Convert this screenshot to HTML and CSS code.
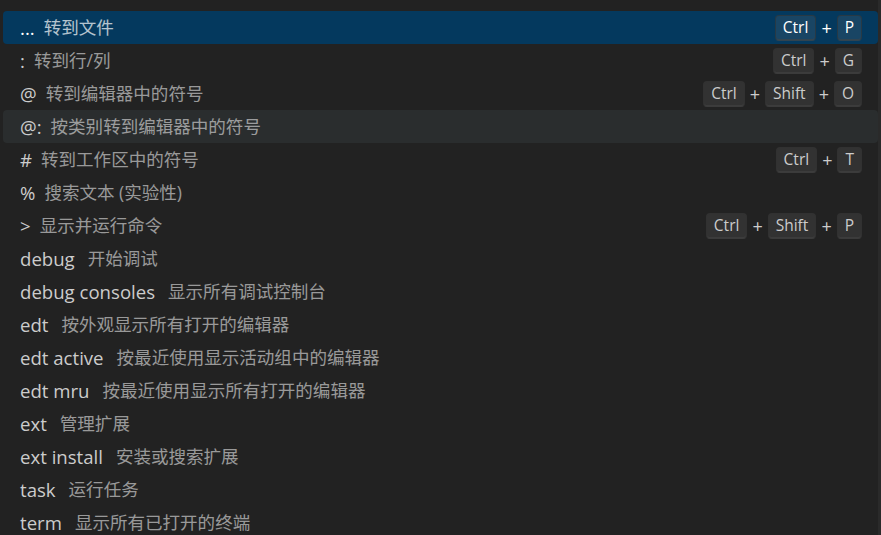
FILE: index.html
```html
<!DOCTYPE html>
<html lang="zh-CN">
<head>
<meta charset="utf-8">
<title>Quick Access</title>
<link rel="stylesheet" href="styles.css">
</head>
<body>
<div class="widget">
  <div class="list">
    <div class="row selected"><span class="label">...</span><span class="desc">转到文件</span><span class="keys"><kbd>Ctrl</kbd><span class="plus">+</span><kbd>P</kbd></span></div>
    <div class="row"><span class="label">:</span><span class="desc">转到行/列</span><span class="keys"><kbd>Ctrl</kbd><span class="plus">+</span><kbd>G</kbd></span></div>
    <div class="row"><span class="label">@</span><span class="desc">转到编辑器中的符号</span><span class="keys"><kbd>Ctrl</kbd><span class="plus">+</span><kbd>Shift</kbd><span class="plus">+</span><kbd>O</kbd></span></div>
    <div class="row hover"><span class="label">@:</span><span class="desc">按类别转到编辑器中的符号</span></div>
    <div class="row"><span class="label">#</span><span class="desc">转到工作区中的符号</span><span class="keys"><kbd>Ctrl</kbd><span class="plus">+</span><kbd>T</kbd></span></div>
    <div class="row"><span class="label">%</span><span class="desc">搜索文本 (实验性)</span></div>
    <div class="row"><span class="label">&gt;</span><span class="desc">显示并运行命令</span><span class="keys"><kbd>Ctrl</kbd><span class="plus">+</span><kbd>Shift</kbd><span class="plus">+</span><kbd>P</kbd></span></div>
    <div class="row"><span class="label">debug</span><span class="desc word">开始调试</span></div>
    <div class="row"><span class="label">debug consoles</span><span class="desc word">显示所有调试控制台</span></div>
    <div class="row"><span class="label">edt</span><span class="desc word">按外观显示所有打开的编辑器</span></div>
    <div class="row"><span class="label">edt active</span><span class="desc word">按最近使用显示活动组中的编辑器</span></div>
    <div class="row"><span class="label">edt mru</span><span class="desc word">按最近使用显示所有打开的编辑器</span></div>
    <div class="row"><span class="label">ext</span><span class="desc word">管理扩展</span></div>
    <div class="row"><span class="label">ext install</span><span class="desc word">安装或搜索扩展</span></div>
    <div class="row"><span class="label">task</span><span class="desc word">运行任务</span></div>
    <div class="row"><span class="label">term</span><span class="desc word">显示所有已打开的终端</span></div>
  </div>
  <div class="scrollbar"></div>
</div>
</body>
</html>
```

FILE: styles.css
```css
html, body {
  margin: 0;
  padding: 0;
  background: #222222;
  height: 100%;
  overflow: hidden;
}

.widget {
  display: flex;
  width: 881px;
  height: 535px;
  overflow: hidden;
  font-family: "Open Sans", "Noto Sans CJK SC", sans-serif;
  color: #cccccc;
}

.list {
  flex: 1;
  padding: 11px 0 0 3px;
  display: flex;
  flex-direction: column;
}

.scrollbar {
  width: 3px;
  background: #2a2a2a;
}

.row {
  flex: none;
  height: 33px;
  display: flex;
  align-items: center;
  padding: 0 16px 0 17px;
  border-radius: 4px;
  white-space: nowrap;
}

.row.selected {
  background: #04395e;
  color: #ffffff;
}

.row.hover {
  background: #2a2d2e;
}

.label {
  font-size: 18.6px;
  line-height: 33px;
}

.desc {
  font-size: 17.55px;
  line-height: 33px;
  margin-left: 9px;
  opacity: 0.7;
}

.desc.word {
  margin-left: 13px;
}

.keys {
  margin-left: auto;
  display: flex;
  align-items: center;
}

kbd {
  font-family: "Open Sans", sans-serif;
  font-size: 15.5px;
  line-height: 15px;
  padding: 4px 7px 5px;
  border-radius: 4px;
  background: rgba(128, 128, 128, 0.17);
  border: 1px solid rgba(51, 51, 51, 0.6);
  border-bottom-color: rgba(68, 68, 68, 0.6);
  box-shadow: inset 0 -1px 0 rgba(68, 68, 68, 0.6);
  color: #cccccc;
}

.selected kbd {
  color: #ffffff;
}

.plus {
  font-size: 18px;
  margin: 0 5px;
}
```
